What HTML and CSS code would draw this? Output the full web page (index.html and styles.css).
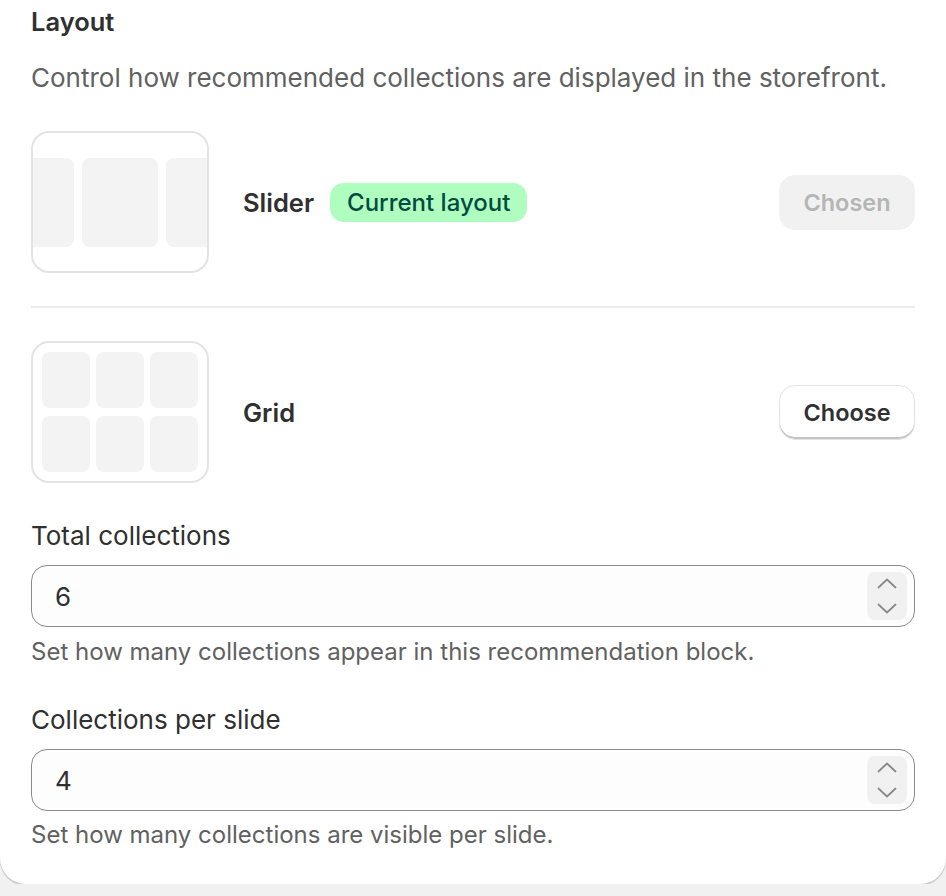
FILE: index.html
```html
<!DOCTYPE html>
<html lang="en">
<head>
  <meta charset="UTF-8">
  <meta name="viewport" content="width=device-width, initial-scale=1.0">
  <title>Layout settings</title>
  <link rel="stylesheet" href="styles.css">
</head>
<body>
  <div class="card">
    <h2 class="card-title">Layout</h2>
    <p class="card-desc">Control how recommended collections are displayed in the storefront.</p>

    <div class="layout-row">
      <div class="thumb thumb-slider">
        <div class="slide"></div>
        <div class="slide"></div>
        <div class="slide"></div>
      </div>
      <span class="layout-name">Slider</span>
      <span class="badge">Current layout</span>
      <button class="btn btn-disabled" disabled>Chosen</button>
    </div>

    <div class="divider"></div>

    <div class="layout-row">
      <div class="thumb thumb-grid">
        <div class="cell"></div>
        <div class="cell"></div>
        <div class="cell"></div>
        <div class="cell"></div>
        <div class="cell"></div>
        <div class="cell"></div>
      </div>
      <span class="layout-name">Grid</span>
      <button class="btn">Choose</button>
    </div>

    <div class="field">
      <label class="field-label">Total collections</label>
      <div class="input">
        <span class="input-value">6</span>
        <div class="spinner">
          <svg width="20" height="11" viewBox="0 0 20 11"><polyline points="1.5,9.5 10,1.5 18.5,9.5" fill="none" stroke="#8a8a8a" stroke-width="1.8" stroke-linecap="round" stroke-linejoin="round"/></svg>
          <svg width="20" height="11" viewBox="0 0 20 11"><polyline points="1.5,1.5 10,9.5 18.5,1.5" fill="none" stroke="#8a8a8a" stroke-width="1.8" stroke-linecap="round" stroke-linejoin="round"/></svg>
        </div>
      </div>
      <p class="field-help">Set how many collections appear in this recommendation block.</p>
    </div>

    <div class="field field-second">
      <label class="field-label">Collections per slide</label>
      <div class="input">
        <span class="input-value">4</span>
        <div class="spinner">
          <svg width="20" height="11" viewBox="0 0 20 11"><polyline points="1.5,9.5 10,1.5 18.5,9.5" fill="none" stroke="#8a8a8a" stroke-width="1.8" stroke-linecap="round" stroke-linejoin="round"/></svg>
          <svg width="20" height="11" viewBox="0 0 20 11"><polyline points="1.5,1.5 10,9.5 18.5,1.5" fill="none" stroke="#8a8a8a" stroke-width="1.8" stroke-linecap="round" stroke-linejoin="round"/></svg>
        </div>
      </div>
      <p class="field-help">Set how many collections are visible per slide.</p>
    </div>
  </div>
</body>
</html>
```

FILE: styles.css
```css
body {
  margin: 0;
  padding: 0;
  background-color: #f1f1f1;
  font-family: 'Inter', 'Noto Sans', sans-serif;
  color: #303030;
}
.card {
  background: #ffffff;
  padding: 2px 31px 29px;
  border-radius: 0 0 26px 26px;
  box-shadow: 0 2px 0 rgba(0, 0, 0, 0.12), 0 0 0 1px rgba(0, 0, 0, 0.05);
}
.card-title {
  margin: 0;
  font-size: 25.5px;
  line-height: 40px;
  font-weight: 600;
  color: #303030;
}
.card-desc {
  margin: 16px 0 0;
  font-size: 26px;
  line-height: 40px;
  color: #616161;
}
.layout-row {
  display: flex;
  align-items: center;
  padding: 33px 0;
}
.thumb {
  width: 178px;
  height: 142px;
  box-sizing: border-box;
  border: 2px solid #e3e3e3;
  border-radius: 18px;
  overflow: hidden;
  flex-shrink: 0;
  margin-right: 34px;
}
.thumb-slider {
  display: flex;
  align-items: center;
  justify-content: center;
  gap: 8px;
}
.slide {
  width: 76px;
  height: 89px;
  flex-shrink: 0;
  background: #f3f3f3;
  border-radius: 8px;
}
.thumb-grid {
  display: grid;
  grid-template-columns: repeat(3, 48px);
  grid-auto-rows: 56px;
  column-gap: 6px;
  row-gap: 8px;
  padding: 9px;
}
.cell {
  background: #f3f3f3;
  border-radius: 8px;
}
.layout-name {
  font-size: 25.5px;
  font-weight: 600;
  color: #303030;
}
.badge {
  margin-left: 16px;
  padding: 0 17px;
  height: 39px;
  line-height: 39px;
  border-radius: 14px;
  background: #affebf;
  color: #014b40;
  font-size: 24px;
  font-weight: 550;
}
.btn {
  margin-left: auto;
  width: 136px;
  height: 55px;
  border-radius: 16px;
  font-family: inherit;
  font-size: 23.5px;
  font-weight: 560;
  color: #303030;
  background: #ffffff;
  border: 1.5px solid #e3e3e3;
  box-shadow: inset 0 -2px 0 #c4c4c4;
  cursor: pointer;
}
.btn-disabled {
  background: #f1f1f1;
  border-color: #f1f1f1;
  box-shadow: none;
  color: #b5b5b5;
  cursor: default;
}
.divider {
  height: 2px;
  background: #ebebeb;
}
.field-label {
  display: block;
  font-size: 26px;
  line-height: 40px;
  color: #303030;
}
.input {
  margin-top: 9px;
  height: 62px;
  box-sizing: border-box;
  border: 1.5px solid #8a8a8a;
  border-radius: 16px;
  background: #fdfdfd;
  display: flex;
  align-items: center;
  padding: 0 7px 0 23px;
}
.input-value {
  flex: 1;
  font-size: 26px;
  color: #303030;
}
.spinner {
  width: 40px;
  height: 48px;
  background: #f1f1f1;
  border-radius: 8px;
  display: flex;
  flex-direction: column;
  align-items: center;
  justify-content: center;
  gap: 14px;
}
.field-help {
  margin: 5px 0 0;
  font-size: 24px;
  line-height: 40px;
  color: #616161;
}
.field-second {
  margin-top: 28px;
}
.field-second .field-help {
  margin-top: 4px;
}
```
